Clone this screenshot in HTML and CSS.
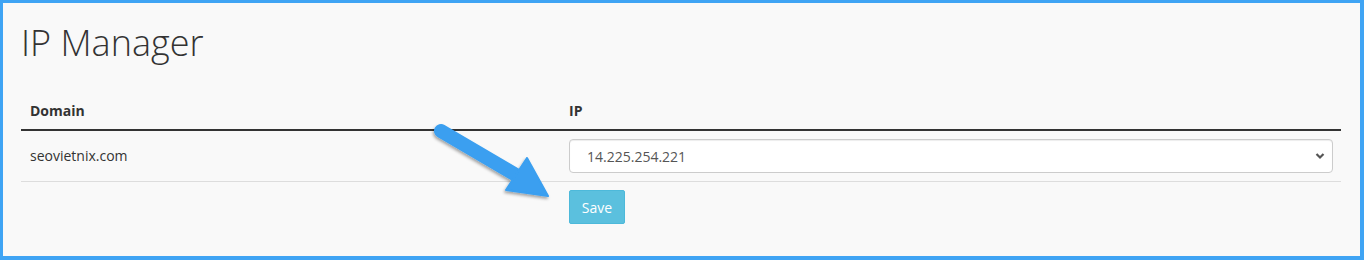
FILE: index.html
```html
<!DOCTYPE html>
<html>
<head>
<meta charset="utf-8">
<title>IP Manager</title>
<link rel="stylesheet" href="styles.css">
</head>
<body>
<div class="frame">
  <div class="panel">
    <h1 class="title">IP Manager</h1>
    <table class="ip-table">
      <colgroup>
        <col class="col-domain">
        <col class="col-ip">
      </colgroup>
      <thead>
        <tr><th>Domain</th><th>IP</th></tr>
      </thead>
      <tbody>
        <tr>
          <td class="domain">seovietnix.com</td>
          <td>
            <div class="select-wrap">
              <select class="ip-select">
                <option>14.225.254.221</option>
              </select>
              <svg class="chevron" width="10" height="8" viewBox="0 0 10 8"><path d="M1.5 2 L5 5.5 L8.5 2" fill="none" stroke="#555" stroke-width="2.2"/></svg>
            </div>
          </td>
        </tr>
      </tbody>
    </table>
    <div class="actions">
      <div class="spacer"></div>
      <div><button class="btn-save">Save</button></div>
    </div>
  </div>
</div>
<svg class="annotation" width="1364" height="260" viewBox="0 0 1364 260">
  <defs>
    <filter id="sh" x="-20%" y="-20%" width="140%" height="140%">
      <feDropShadow dx="-1" dy="2" stdDeviation="1.5" flood-color="#000" flood-opacity="0.35"/>
    </filter>
  </defs>
  <g filter="url(#sh)" fill="#3a9ff0" stroke="#3a9ff0">
    <line x1="441" y1="131" x2="516" y2="175" stroke-width="14" stroke-linecap="round"/>
    <polygon points="548,196 527,158 506,190" stroke-width="2" stroke-linejoin="round"/>
  </g>
</svg>
</body>
</html>
```

FILE: styles.css
```css
html, body {
  margin: 0;
  padding: 0;
}
body {
  width: 1364px;
  height: 260px;
  background: #3fa4f4;
  font-family: "Open Sans", "Liberation Sans", sans-serif;
  color: #333;
  position: relative;
  overflow: hidden;
}
.frame {
  box-sizing: border-box;
  height: 260px;
  padding: 3px 4px 4px 3px;
}
.panel {
  box-sizing: border-box;
  height: 100%;
  background: #f9f9f9;
  padding: 20px 19px 0 18px;
}
.title {
  margin: 0 0 30px 0;
  font-size: 36px;
  font-weight: 300;
  line-height: 40px;
  color: #333;
}
.ip-table {
  width: 1320px;
  border-collapse: collapse;
  font-size: 14px;
}
.col-domain { width: 540px; }
.ip-table th {
  text-align: left;
  font-weight: 700;
  padding: 8px 9px;
  line-height: 20px;
  border-bottom: 2px solid #333;
}
.ip-table td {
  padding: 8px 8px 8px 9px;
  line-height: 20px;
  border-bottom: 1px solid #ddd;
  vertical-align: middle;
}
.ip-table td.domain { color: #333; }
.select-wrap {
  position: relative;
  width: 764px;
}
.ip-select {
  -webkit-appearance: none;
  appearance: none;
  box-sizing: border-box;
  width: 764px;
  height: 34px;
  padding: 0 30px 0 17px;
  border: 1px solid #ccc;
  border-radius: 4px;
  background: #fff;
  color: #555;
  font-family: "Open Sans", "Liberation Sans", sans-serif;
  font-size: 14px;
  box-shadow: inset 0 1px 1px rgba(0,0,0,0.075);
}
.chevron {
  position: absolute;
  right: 8px;
  top: 13px;
}
.actions {
  display: flex;
  margin-top: 8px;
}
.spacer { width: 548px; }
.btn-save {
  box-sizing: border-box;
  height: 34px;
  width: 56px;
  padding: 0;
  background: #5bc0de;
  border: 1px solid #4db9da;
  border-radius: 2px;
  color: #fff;
  font-family: "Open Sans", "Liberation Sans", sans-serif;
  font-size: 14px;
}
.annotation {
  position: absolute;
  left: 0;
  top: 0;
  pointer-events: none;
}
```
